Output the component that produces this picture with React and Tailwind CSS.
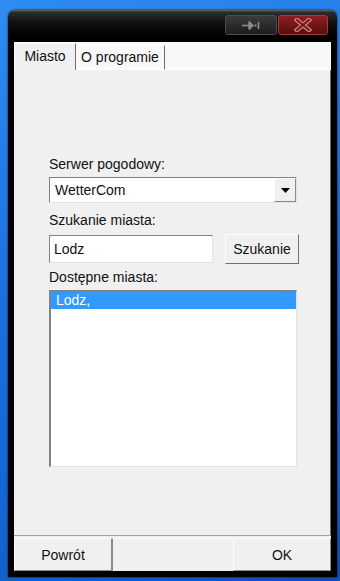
import { useState } from "react"

const raised = "bg-[#f0f0f0] border border-t-white border-l-white border-r-[#8a8a8a] border-b-[#8a8a8a]"
const sunken = "bg-white border border-t-[#828282] border-l-[#828282] border-r-[#e3e3e3] border-b-[#e3e3e3]"

const PinIcon = () => (
  <svg width="18" height="9" viewBox="0 0 18 9">
    <line x1="0" y1="4.5" x2="7" y2="4.5" stroke="#8c8c8c" strokeWidth="1.6" />
    <path d="M7 0.5 L7 8.5 M8 1.5 L11 4.5 L8 7.5 Z" stroke="#8c8c8c" strokeWidth="1.4" fill="#8c8c8c" />
    <rect x="12.5" y="3.5" width="2" height="2" fill="#8c8c8c" />
    <line x1="16.5" y1="1" x2="16.5" y2="8" stroke="#8c8c8c" strokeWidth="1.6" />
  </svg>
)

const CloseIcon = () => (
  <svg width="18" height="14" viewBox="0 0 18 14">
    <path d="M3 2 L15 12 M15 2 L3 12" stroke="#c98585" strokeWidth="4.5" strokeLinecap="square" />
    <path d="M3 2 L15 12 M15 2 L3 12" stroke="#7c1616" strokeWidth="2" strokeLinecap="square" />
  </svg>
)

export default function App() {
  const [tab, setTab] = useState("miasto")
  const [server] = useState("WetterCom")
  const [query, setQuery] = useState("Lodz")
  const [selected, setSelected] = useState(0)
  const cities = ["Lodz,"]

  return (
    <div className="w-[340px] h-[581px] overflow-hidden pl-2 pt-[10px] bg-[linear-gradient(160deg,#2f8cf2_0%,#1a6fdc_45%,#1160cc_85%,#0c50b4_100%)] font-['Liberation_Sans',Arial,sans-serif] text-[14px] leading-4 text-[#111]">
      <div className="w-[329px] h-[567px] rounded-t-[7px] flex flex-col px-[6px] pb-[6px] bg-[linear-gradient(180deg,#6a6a6a_0px,#2e2e2e_2px,#111_12px,#000_28px)] shadow-[0_0_2px_#000]">
        {/* title bar */}
        <div className="h-[32px] flex justify-end items-start gap-px pt-[5px] pr-[3px]">
          <div className="w-[52px] h-[20px] rounded-[3px] border border-[#4c4c4c] bg-[linear-gradient(180deg,#3c3c3c,#1c1c1c)] flex items-center justify-center">
            <PinIcon />
          </div>
          <div className="w-[50px] h-[20px] rounded-[3px] border border-[#a23a3a] bg-[linear-gradient(180deg,#8e2020,#5a0c0c)] flex items-center justify-center">
            <CloseIcon />
          </div>
        </div>

        {/* client */}
        <div className="flex-1 flex flex-col bg-[#f0f0f0]">
          {/* tab strip */}
          <div className="h-[28px] flex items-end bg-[#f8f8f8]">
            <button
              onClick={() => setTab("miasto")}
              className={tab === "miasto"
                ? "w-[62px] h-[27px] bg-[#f0f0f0] border-l border-t border-r border-l-white border-t-white border-r-[#6e6e6e] pb-[2px]"
                : "w-[62px] h-[24px] bg-[#f0f0f0] border-t border-r border-b border-t-white border-r-[#6e6e6e] border-b-white"}
            >
              Miasto
            </button>
            <button
              onClick={() => setTab("info")}
              className={tab === "info"
                ? "w-[89px] h-[27px] bg-[#f0f0f0] border-t border-r border-t-white border-r-[#6e6e6e] pb-[2px]"
                : "w-[89px] h-[25px] bg-[#f8f8f8] border-t border-r border-b border-t-white border-r-[#6e6e6e] border-b-white pb-px"}
            >
              O programie
            </button>
            <div className="flex-1 h-full border-b border-white" />
          </div>

          {/* tab body */}
          <div className="flex-1 flex flex-col pl-[35px] pt-[86px] border-r border-b border-r-[#6e6e6e] border-b-[#a0a0a0]">
            <div>Serwer pogodowy:</div>
            <div className={`mt-[5px] w-[248px] h-[26px] flex items-stretch ${sunken}`}>
              <div className="flex-1 flex items-center pl-[5px]">{server}</div>
              <div className={`w-[22px] flex items-center justify-center ${raised}`}>
                <svg width="9" height="5" viewBox="0 0 9 5"><path d="M0 0 H9 L4.5 5 Z" fill="#000" /></svg>
              </div>
            </div>

            <div className="mt-[9px]">Szukanie miasta:</div>
            <div className="mt-[6px] flex items-center">
              <input
                value={query}
                onChange={(e) => setQuery(e.target.value)}
                className={`w-[164px] h-[28px] pl-[4px] outline-none ${sunken}`}
              />
              <button className={`ml-[12px] w-[74px] h-[30px] ${raised} border-r-[#707070] border-b-[#707070]`}>
                Szukanie
              </button>
            </div>

            <div className="mt-[5px]">Dostępne miasta:</div>
            <div className={`mt-[5px] w-[248px] h-[177px] ${sunken} border-l-2 border-t-2`}>
              {cities.map((c, i) => (
                <div
                  key={c}
                  onClick={() => setSelected(i)}
                  className={selected === i ? "h-[17px] pl-[5px] bg-[#3399ff] text-white" : "h-[17px] pl-[5px]"}
                >
                  {c}
                </div>
              ))}
            </div>
          </div>

          {/* bottom buttons */}
          <div className="h-[33px] mt-[2px] flex">
            <button className={`w-[98px] ${raised} border-r-[#6e6e6e]`}>Powrót</button>
            <div className="w-[121px] bg-[#f0f0f0] border-t border-l border-t-white border-l-[#8a8a8a]" />
            <button className={`w-[98px] ${raised} border-r-[#6e6e6e]`}>OK</button>
          </div>
        </div>
      </div>
    </div>
  )
}
